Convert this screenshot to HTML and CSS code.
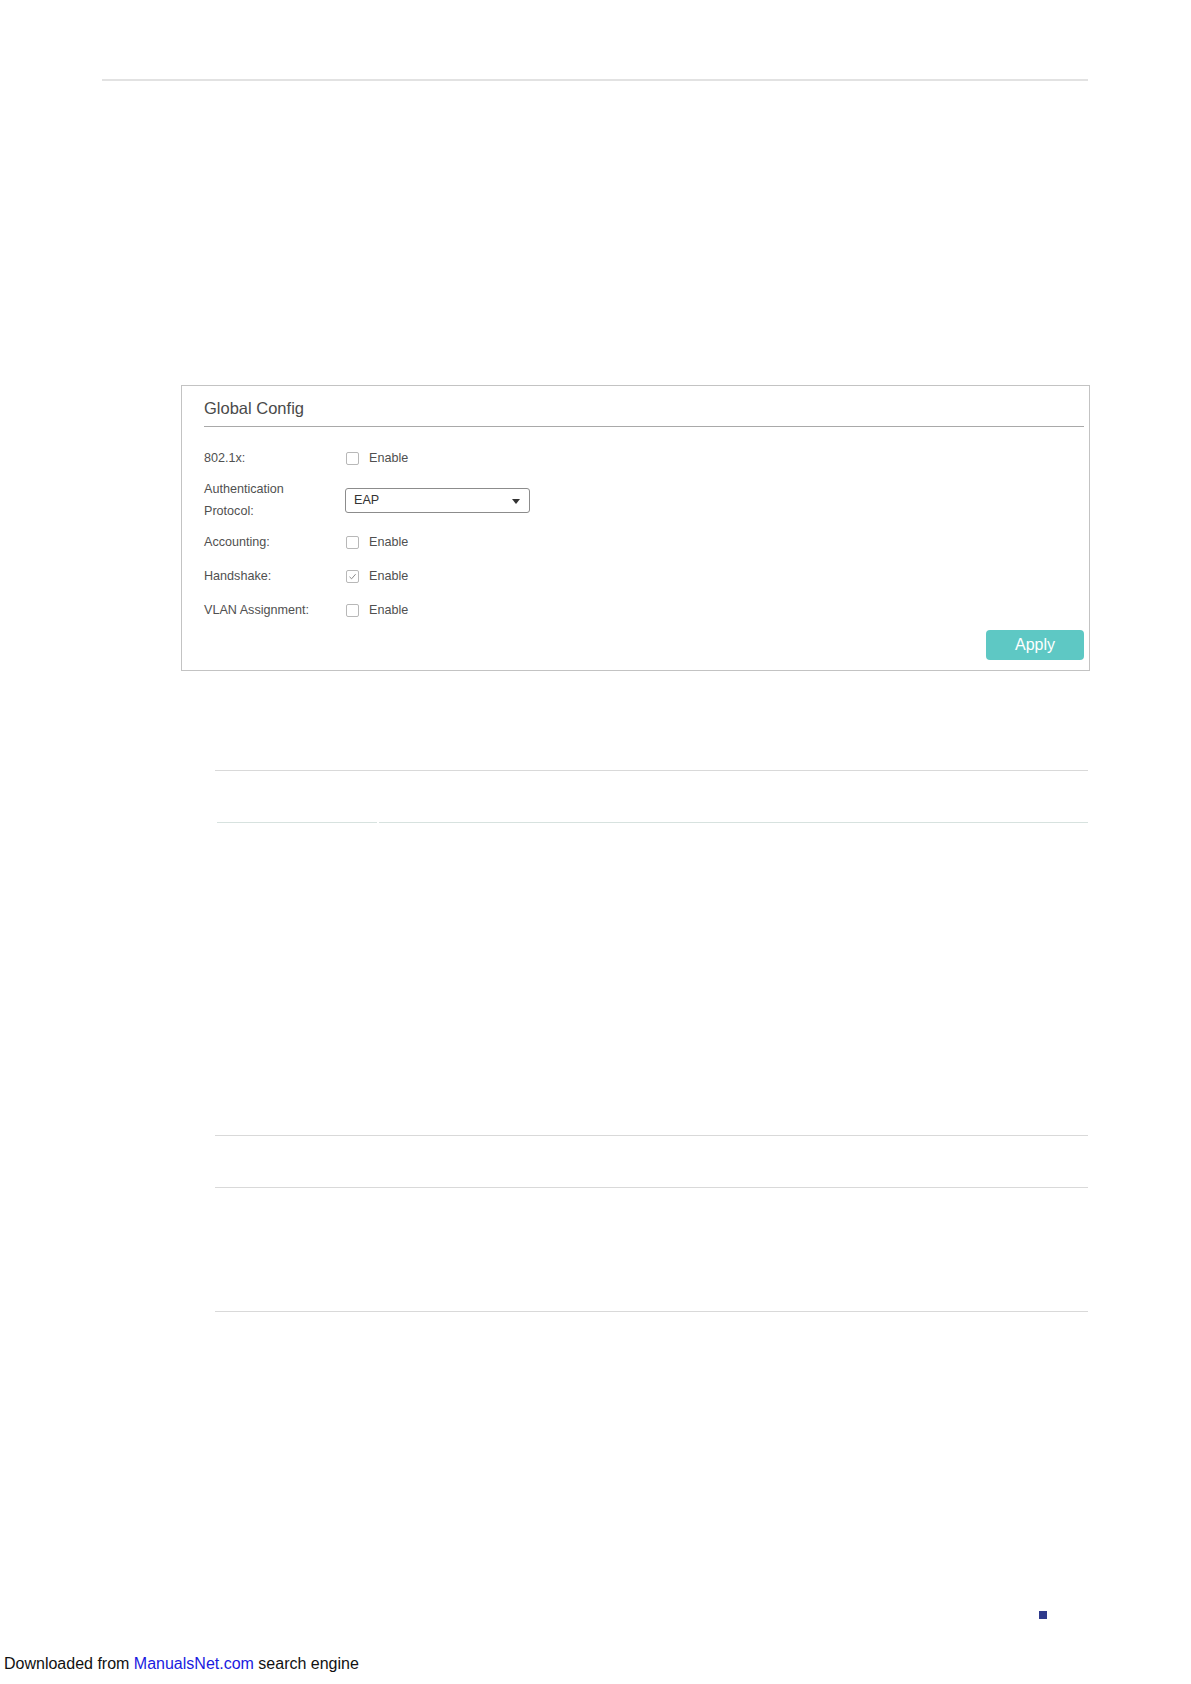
FILE: index.html
```html
<!DOCTYPE html>
<html lang="en">
<head>
	<meta charset="UTF-8">
	<title>802.1X Global Config</title>
	<link rel="stylesheet" href="styles.css">
</head>
<body>
<div class="page">
    <div class="top-rule"></div>

    <div class="panel">
        <div class="panel-title">Global Config</div>
        <div class="row">
            <span class="label">802.1x:</span>
            <label class="check"><span class="box"></span>Enable</label>
        </div>
        <div class="row row-tall">
            <span class="label">Authentication<br>Protocol:</span>
            <div class="select">EAP<span class="caret"></span></div>
        </div>
        <div class="row">
            <span class="label">Accounting:</span>
            <label class="check"><span class="box"></span>Enable</label>
        </div>
        <div class="row">
            <span class="label">Handshake:</span>
            <label class="check"><span class="box checked">
                <svg width="9" height="9" viewBox="0 0 9 9"><path d="M1.5 4.8 L3.6 6.8 L7.6 2.2" fill="none" stroke="#8a8a8a" stroke-width="1"/></svg>
            </span>Enable</label>
        </div>
        <div class="row">
            <span class="label">VLAN Assignment:</span>
            <label class="check"><span class="box"></span>Enable</label>
        </div>
        <div class="actions">
            <span class="btn">Apply</span>
        </div>
    </div>

    <div class="rules">
        <div class="rule first"></div>
        <div class="rule split"><span></span><span></span></div>
        <div class="rule third"></div>
        <div class="rule fourth"></div>
        <div class="rule fifth"></div>
    </div>

    <div class="page-mark"></div>
</div>
<div class="source">Downloaded from <a href="#">ManualsNet.com</a> search engine</div>
</body>
</html>
```

FILE: styles.css
```css
body,html{
    padding: 0;
    margin: 0;
    background: #ffffff;
    font-family: "Liberation Sans", Arial, sans-serif;
    color: #000000;
}
.page{
    width: 1191px;
    padding-top: 79px;
}
.top-rule{
    margin-left: 102px;
    width: 986px;
    height: 2px;
    background: #e2e2e2;
}

/* config panel */
.panel{
    margin: 304px 0 0 181px;
    width: 909px;
    border: 1px solid #c3c3c3;
    box-sizing: border-box;
    padding: 0 5px 10px 22px;
    color: #4a4a4a;
}
.panel-title{
    padding-top: 11px;
    padding-bottom: 7px;
    height: 22px;
    line-height: 22px;
    font-size: 16.5px;
    color: #4a4a4a;
    border-bottom: 1px solid #a9a9a9;
    margin-bottom: 14px;
}
.row{
    display: flex;
    align-items: center;
    height: 34px;
    font-size: 12.6px;
}
.row-tall{
    height: 50px;
}
.label{
    width: 142px;
    flex: none;
    line-height: 22px;
    color: #505050;
}
.check{
    display: flex;
    align-items: center;
    gap: 10px;
    color: #505050;
}
.box{
    width: 13px;
    height: 13px;
    box-sizing: border-box;
    border: 1px solid #b8b8b8;
    border-radius: 2px;
    display: flex;
    align-items: center;
    justify-content: center;
}
.select{
    position: relative;
    width: 185px;
    height: 25px;
    box-sizing: border-box;
    border: 1px solid #8c8c8c;
    border-radius: 3px;
    padding-left: 8px;
    line-height: 22px;
    color: #333333;
    margin-left: -1px;
}
.caret{
    position: absolute;
    right: 9px;
    top: 10px;
    width: 0;
    height: 0;
    border-left: 4.5px solid transparent;
    border-right: 4.5px solid transparent;
    border-top: 5px solid #333333;
}
.actions{
    display: flex;
    justify-content: flex-end;
    margin-top: 3px;
}
.btn{
    width: 98px;
    height: 30px;
    line-height: 30px;
    text-align: center;
    background: #5ec8c4;
    color: #ffffff;
    border-radius: 4px;
    font-size: 16px;
}

/* separators below */
.rules{
    margin-left: 215px;
    width: 873px;
}
.rule{
    height: 1px;
    background: #d9d9d9;
}
.rule.first{
    margin-top: 99px;
}
.rule.split{
    margin-top: 51px;
    display: flex;
    gap: 2px;
    background: none;
    padding-left: 2px;
}
.rule.split span{
    height: 1px;
    background: #d7e2df;
}
.rule.split span:first-child{
    width: 160px;
}
.rule.split span:last-child{
    flex: 1;
}
.rule.third{
    margin-top: 312px;
}
.rule.fourth{
    margin-top: 51px;
}
.rule.fifth{
    margin-top: 123px;
}

.page-mark{
    margin: 299px 0 0 1039px;
    width: 8px;
    height: 8px;
    background: #2f3b8c;
}
.source{
    margin-top: 36px;
    padding-left: 4px;
    font-size: 16px;
    line-height: 18px;
    color: #111111;
}
.source a{
    color: #1a1ae0;
    text-decoration: none;
}
```
